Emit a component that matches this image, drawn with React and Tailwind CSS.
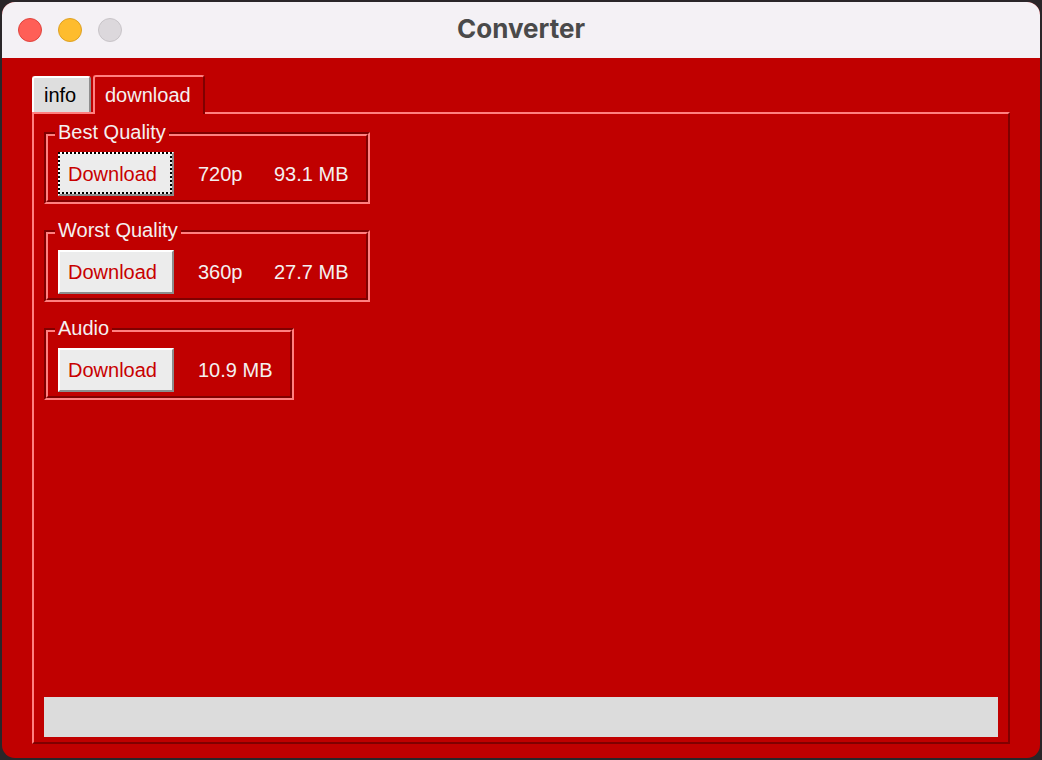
import React from "react";

const font = { fontFamily: '"Liberation Sans", Arial, sans-serif' };

function Light({ color, ring }) {
  return <span className={`block w-[24px] h-[24px] rounded-full border ${color} ${ring}`} />;
}

function Btn({ focused }) {
  return (
    <div className="relative w-[116px] h-[44px] shrink-0 bg-[#ececec] border-t-2 border-l-2 border-t-white border-l-white border-r-2 border-b-2 border-r-[#8c8c8c] border-b-[#8c8c8c] flex items-center pl-[8px] text-[20px] leading-none text-[#c80000]">
      Download
      {focused && (
        <span className="absolute -left-[2px] -top-[2px] right-0 bottom-0 border-2 border-dotted border-black" />
      )}
    </div>
  );
}

function Group({ label, width, children }) {
  return (
    <div className={`relative pt-[11px] ${width}`}>
      <span className="absolute left-[11px] top-0 px-[3px] bg-[#c00000] text-[20px] leading-[23px] text-[#f4f0f0]">
        {label}
      </span>
      <div className="border-2 border-t-[#800000] border-l-[#800000] border-b-[#ff8080] border-r-[#ff8080]">
        <div className="h-[68px] border-2 border-t-[#ff8080] border-l-[#ff8080] border-b-[#800000] border-r-[#800000] flex items-start pt-[16px] pl-[10px]">
          {children}
        </div>
      </div>
    </div>
  );
}

export default function App() {
  return (
    <div className="w-[1042px] h-[760px] bg-[#2a2629] p-[2px]" style={font}>
      <div className="w-[1038px] h-[756px] rounded-[13px] overflow-hidden flex flex-col bg-[#c00000]">
        {/* title bar */}
        <div className="h-[56px] shrink-0 bg-[#f4f1f5] grid grid-cols-[1fr_auto_1fr] items-center">
          <div className="flex items-center gap-[16px] pl-[16px]">
            <Light color="bg-[#ff5f57]" ring="border-[#e0443e]" />
            <Light color="bg-[#febc2e]" ring="border-[#dea123]" />
            <Light color="bg-[#dcd8dc]" ring="border-[#c8c4c8]" />
          </div>
          <div className="text-[26px] font-bold text-[#4a4a4a] leading-none pb-[2px]" style={{ fontFamily: 'Inter, "Liberation Sans", sans-serif' }}>
            Converter
          </div>
          <div />
        </div>

        {/* body */}
        <div className="flex-1 flex flex-col px-[30px] pt-[18px] pb-[14px]">
          <div className="h-[36px] flex items-end gap-[2px] relative z-10">
            <div className="w-[59px] h-[36px] bg-[#dedede] rounded-t-[3px] border-t-2 border-l-2 border-t-white border-l-white border-r-2 border-r-[#8e8e8e] flex items-center pl-[10px] text-[20px] text-black">
              info
            </div>
            <div className="w-[112px] h-[39px] -mb-[2px] bg-[#c00000] rounded-t-[3px] border-t-2 border-l-2 border-t-[#ff8080] border-l-[#ff8080] border-r-2 border-r-[#800000] flex items-center pl-[10px] pb-[2px] text-[20px] text-[#f4f0f0]">
              download
            </div>
          </div>

          <div className="flex-1 flex flex-col border-2 border-t-[#ff8080] border-l-[#ff8080] border-b-[#800000] border-r-[#800000] px-[10px] pt-[7px] pb-[5px]">
            <div className="flex flex-col gap-[15px]">
              <Group label="Best Quality" width="w-[326px]">
                <Btn focused />
                <span className="ml-[24px] w-[76px] leading-[44px] text-[20px] text-[#f4f0f0]">720p</span>
                <span className="leading-[44px] text-[20px] text-[#f4f0f0]">93.1 MB</span>
              </Group>
              <Group label="Worst Quality" width="w-[326px]">
                <Btn />
                <span className="ml-[24px] w-[76px] leading-[44px] text-[20px] text-[#f4f0f0]">360p</span>
                <span className="leading-[44px] text-[20px] text-[#f4f0f0]">27.7 MB</span>
              </Group>
              <Group label="Audio" width="w-[250px]">
                <Btn />
                <span className="ml-[24px] leading-[44px] text-[20px] text-[#f4f0f0]">10.9 MB</span>
              </Group>
            </div>
            <div className="flex-1" />
            <div className="h-[40px] bg-[#dcdcdc]" />
          </div>
        </div>
      </div>
    </div>
  );
}
